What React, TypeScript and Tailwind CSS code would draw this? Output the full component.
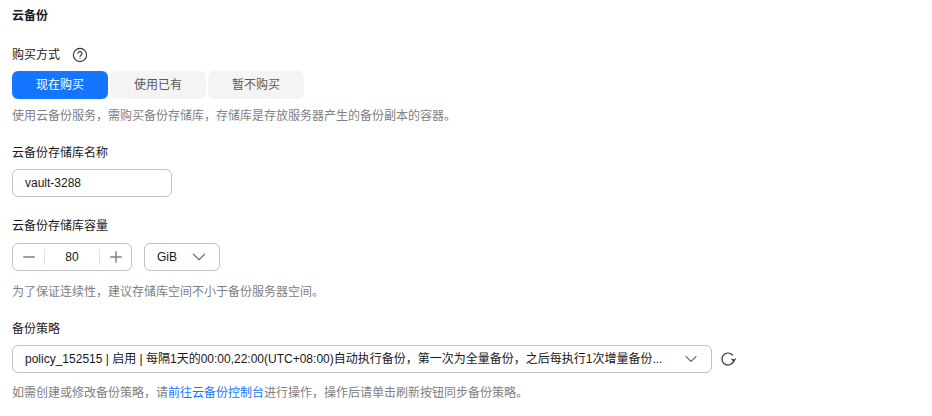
import React from "react";
import { ChevronDown, Minus, Plus } from "lucide-react";

const font = "font-['Liberation_Sans','Noto_Sans_CJK_SC',sans-serif]";

function Label({ children }: { children: React.ReactNode }) {
  return <div className="h-[18px] text-xs leading-[18px] text-[#191919]">{children}</div>;
}

export default function App() {
  return (
    <div className={`${font} h-[416px] w-[932px] overflow-hidden bg-white pl-3 pt-[7px]`}>
      <div className="h-[18px] text-xs font-bold leading-[18px] text-[#191919]">云备份</div>

      <div className="mt-[21px] flex h-[18px] items-center">
        <span className="text-xs leading-[18px] text-[#191919]">购买方式</span>
        <svg className="ml-[12px]" width="16" height="16" viewBox="0 0 16 16" fill="none" stroke="#333" strokeWidth="1.1">
          <circle cx="8" cy="8" r="6.6" />
          <path d="M6 6.4a2 2 0 1 1 3.1 1.7c-.7.4-1.1.8-1.1 1.6" strokeLinecap="round" />
          <path d="M8 11.2v.9" />
        </svg>
      </div>
      <div className="mt-[7px] flex gap-[2px]">
        <div className="flex h-[28px] w-[96px] items-center justify-center rounded-md bg-[#1476ff] text-xs text-white">现在购买</div>
        <div className="flex h-[28px] w-[96px] items-center justify-center rounded-md bg-[#f4f4f4] text-xs text-[#595959]">使用已有</div>
        <div className="flex h-[28px] w-[96px] items-center justify-center rounded-md bg-[#f4f4f4] text-xs text-[#595959]">暂不购买</div>
      </div>
      <div className="mt-2 h-[18px] text-xs leading-[18px] text-[#808080]">使用云备份服务，需购买备份存储库，存储库是存放服务器产生的备份副本的容器。</div>

      <div className="mt-[19px]"><Label>云备份存储库名称</Label></div>
      <div className="mt-[7px] flex h-[28px] w-[160px] items-center rounded-md border border-[#c2c2c2] pl-3 text-xs text-[#191919]">vault-3288</div>

      <div className="mt-5"><Label>云备份存储库容量</Label></div>
      <div className="mt-2 flex gap-3">
        <div className="flex h-[28px] w-[120px] items-center rounded-md border border-[#c2c2c2] text-xs text-[#191919]">
          <div className="flex h-[16px] w-[32px] items-center justify-center border-r border-[#dfdfdf]">
            <Minus size={18} strokeWidth={1.9} color="#808080" />
          </div>
          <div className="flex-1 text-center">80</div>
          <div className="flex h-[16px] w-[32px] items-center justify-center border-l border-[#dfdfdf]">
            <Plus size={18} strokeWidth={1.9} color="#808080" />
          </div>
        </div>
        <div className="flex h-[28px] w-[76px] items-center justify-between rounded-md border border-[#c2c2c2] pl-3 pr-[9px] text-xs text-[#191919]">
          <span>GiB</span>
          <ChevronDown size={22} strokeWidth={1.3} color="#737373" />
        </div>
      </div>
      <div className="mt-3 h-[18px] text-xs leading-[18px] text-[#808080]">为了保证连续性，建议存储库空间不小于备份服务器空间。</div>

      <div className="mt-[19px]"><Label>备份策略</Label></div>
      <div className="mt-[7px] flex items-center">
        <div className="flex h-[28px] w-[700px] items-center justify-between rounded-md border border-[#c2c2c2] pl-3 pr-[10px] text-xs text-[#191919]">
          <span className="whitespace-nowrap">policy_152515 | 启用 | 每隔1天的00:00,22:00(UTC+08:00)自动执行备份，第一次为全量备份，之后每执行1次增量备份...</span>
          <ChevronDown size={20} strokeWidth={1.4} color="#737373" />
        </div>
        <svg className="ml-2" width="16" height="16" viewBox="0 0 16 16" fill="none" stroke="#333" strokeWidth="1.2">
          <path d="M13.9 8.6A6 6 0 1 1 12.4 4" strokeLinecap="round" />
          <path d="M12 8.2l1.9 1.8 1.6-2" strokeLinejoin="round" strokeLinecap="round" />
        </svg>
      </div>
      <div className="mt-[11px] h-[18px] text-xs leading-[18px] text-[#808080]">
        如需创建或修改备份策略，请<span className="text-[#1476ff]">前往云备份控制台</span>进行操作，操作后请单击刷新按钮同步备份策略。
      </div>
    </div>
  );
}
